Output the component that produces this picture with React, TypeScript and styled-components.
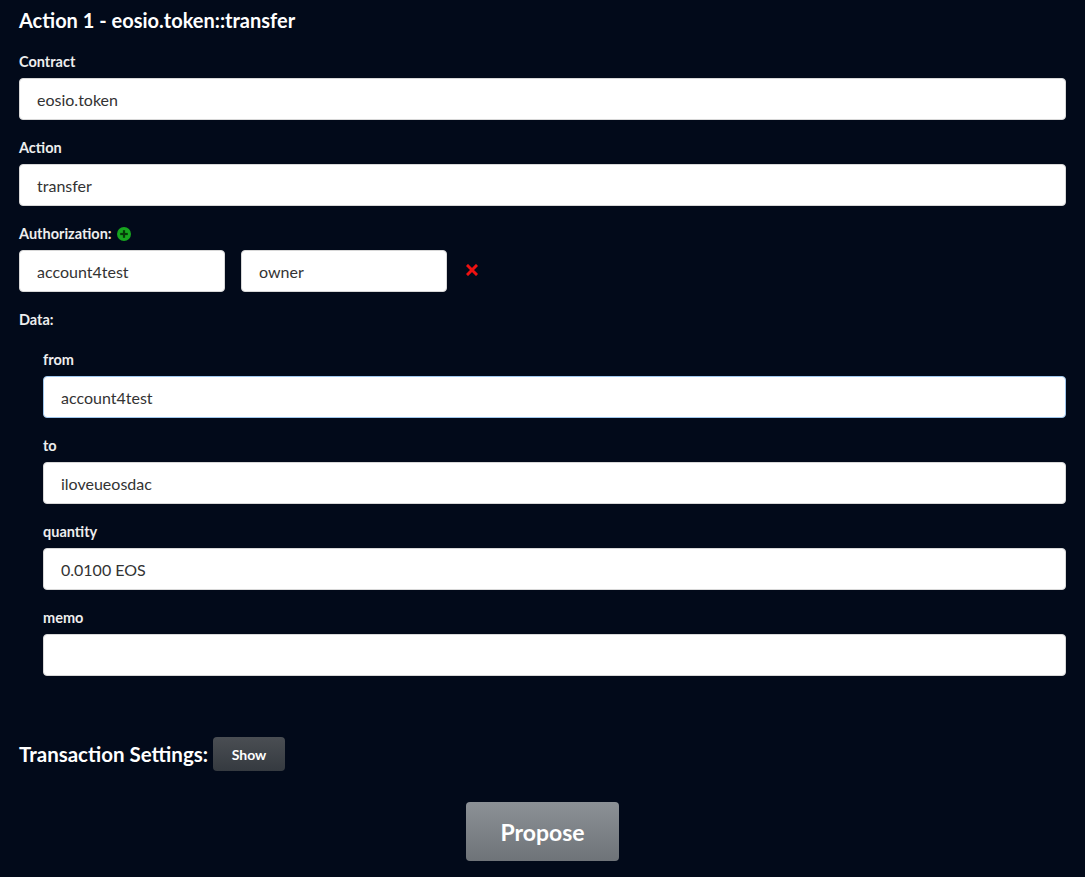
import styled, { createGlobalStyle } from "styled-components";

const GlobalStyle = createGlobalStyle`
  html, body {
    margin: 0;
    padding: 0;
    background: #020a1a;
  }
  body {
    font-family: Lato, "Open Sans", sans-serif;
    color: #f2f2f2;
  }
`;

interface FieldProps {
  label: string;
  value: string;
  focused?: boolean;
}

function Field({ label, value, focused }: FieldProps) {
  return (
    <Group>
      <Label>{label}</Label>
      <Input $focused={focused} defaultValue={value} readOnly />
    </Group>
  );
}

const dataFields = [
  { label: "from", value: "account4test", focused: true },
  { label: "to", value: "iloveueosdac" },
  { label: "quantity", value: "0.0100 EOS" },
  { label: "memo", value: "" },
];

function App() {
  return (
    <Page>
      <GlobalStyle />
      <Title>Action 1 - eosio.token::transfer</Title>
      <Field label="Contract" value="eosio.token" />
      <Field label="Action" value="transfer" />
      <Group>
        <Label>
          Authorization:
          <AddIcon viewBox="0 0 14 14">
            <circle cx="7" cy="7" r="7" fill="#17a51f" />
            <rect x="3.2" y="5.9" width="7.6" height="2.2" fill="#063a09" />
            <rect x="5.9" y="3.2" width="2.2" height="7.6" fill="#063a09" />
          </AddIcon>
        </Label>
        <AuthRow>
          <SmallInput defaultValue="account4test" readOnly />
          <SmallInput defaultValue="owner" readOnly />
          <RemoveIcon viewBox="0 0 12 12">
            <path
              d="M2 2 L10 10 M10 2 L2 10"
              stroke="#ee1111"
              strokeWidth="3"
              strokeLinecap="square"
            />
          </RemoveIcon>
        </AuthRow>
      </Group>
      <DataLabel>Data:</DataLabel>
      <DataBlock>
        {dataFields.map((f) => (
          <Field key={f.label} {...f} />
        ))}
      </DataBlock>
      <SettingsRow>
        <SettingsTitle>Transaction Settings:</SettingsTitle>
        <ShowButton>Show</ShowButton>
      </SettingsRow>
      <Footer>
        <ProposeButton>Propose</ProposeButton>
      </Footer>
    </Page>
  );
}

export default App;

const Page = styled.div`
  padding: 8px 19px 15px 19px;
  min-height: 877px;
  box-sizing: border-box;
`;
const Title = styled.h2`
  margin: 0 0 21px 0;
  font-size: 20px;
  line-height: 24px;
  font-weight: 700;
  color: #fff;
`;
const Group = styled.div`
  margin-bottom: 19px;
`;
const Label = styled.label`
  display: flex;
  align-items: center;
  gap: 5px;
  font-size: 14.5px;
  font-weight: 700;
  line-height: 17px;
  margin-bottom: 8px;
  color: #eeeeee;
`;
const Input = styled.input<{ $focused?: boolean }>`
  display: block;
  width: 100%;
  box-sizing: border-box;
  height: 42px;
  padding: 0 17px;
  border-radius: 4px;
  border: 1px solid ${(p) => (p.$focused ? "#9fc6ec" : "#d8d8d8")};
  background: #fff;
  font-family: Lato, "Open Sans", sans-serif;
  font-size: 16px;
  color: #333;
  outline: none;
`;
const AuthRow = styled.div`
  display: flex;
  align-items: center;
  gap: 16px;
`;
const SmallInput = styled(Input)`
  width: 206px;
`;
const AddIcon = styled.svg`
  width: 14px;
  height: 14px;
`;
const RemoveIcon = styled.svg`
  width: 12px;
  height: 12px;
  margin-left: 3px;
  margin-top: -3px;
`;
const DataLabel = styled(Label)`
  margin-bottom: 23px;
`;
const DataBlock = styled.div`
  padding-left: 24px;
`;
const SettingsRow = styled.div`
  display: flex;
  align-items: center;
  gap: 5px;
  margin-top: 61px;
`;
const SettingsTitle = styled.h3`
  margin: 0;
  font-size: 20.5px;
  font-weight: 700;
  color: #fff;
`;
const ShowButton = styled.button`
  width: 72px;
  height: 34px;
  border: none;
  border-radius: 4px;
  background: linear-gradient(#4a4e53, #353a40);
  color: #fff;
  font-family: Lato, "Open Sans", sans-serif;
  font-size: 14px;
  font-weight: 700;
`;
const Footer = styled.div`
  display: flex;
  justify-content: center;
  margin-top: 31px;
`;
const ProposeButton = styled.button`
  width: 153px;
  height: 59px;
  border: none;
  border-radius: 4px;
  background: linear-gradient(#8c9196, #6e7378);
  color: #fff;
  font-family: Lato, "Open Sans", sans-serif;
  font-size: 23px;
  font-weight: 700;
`;
